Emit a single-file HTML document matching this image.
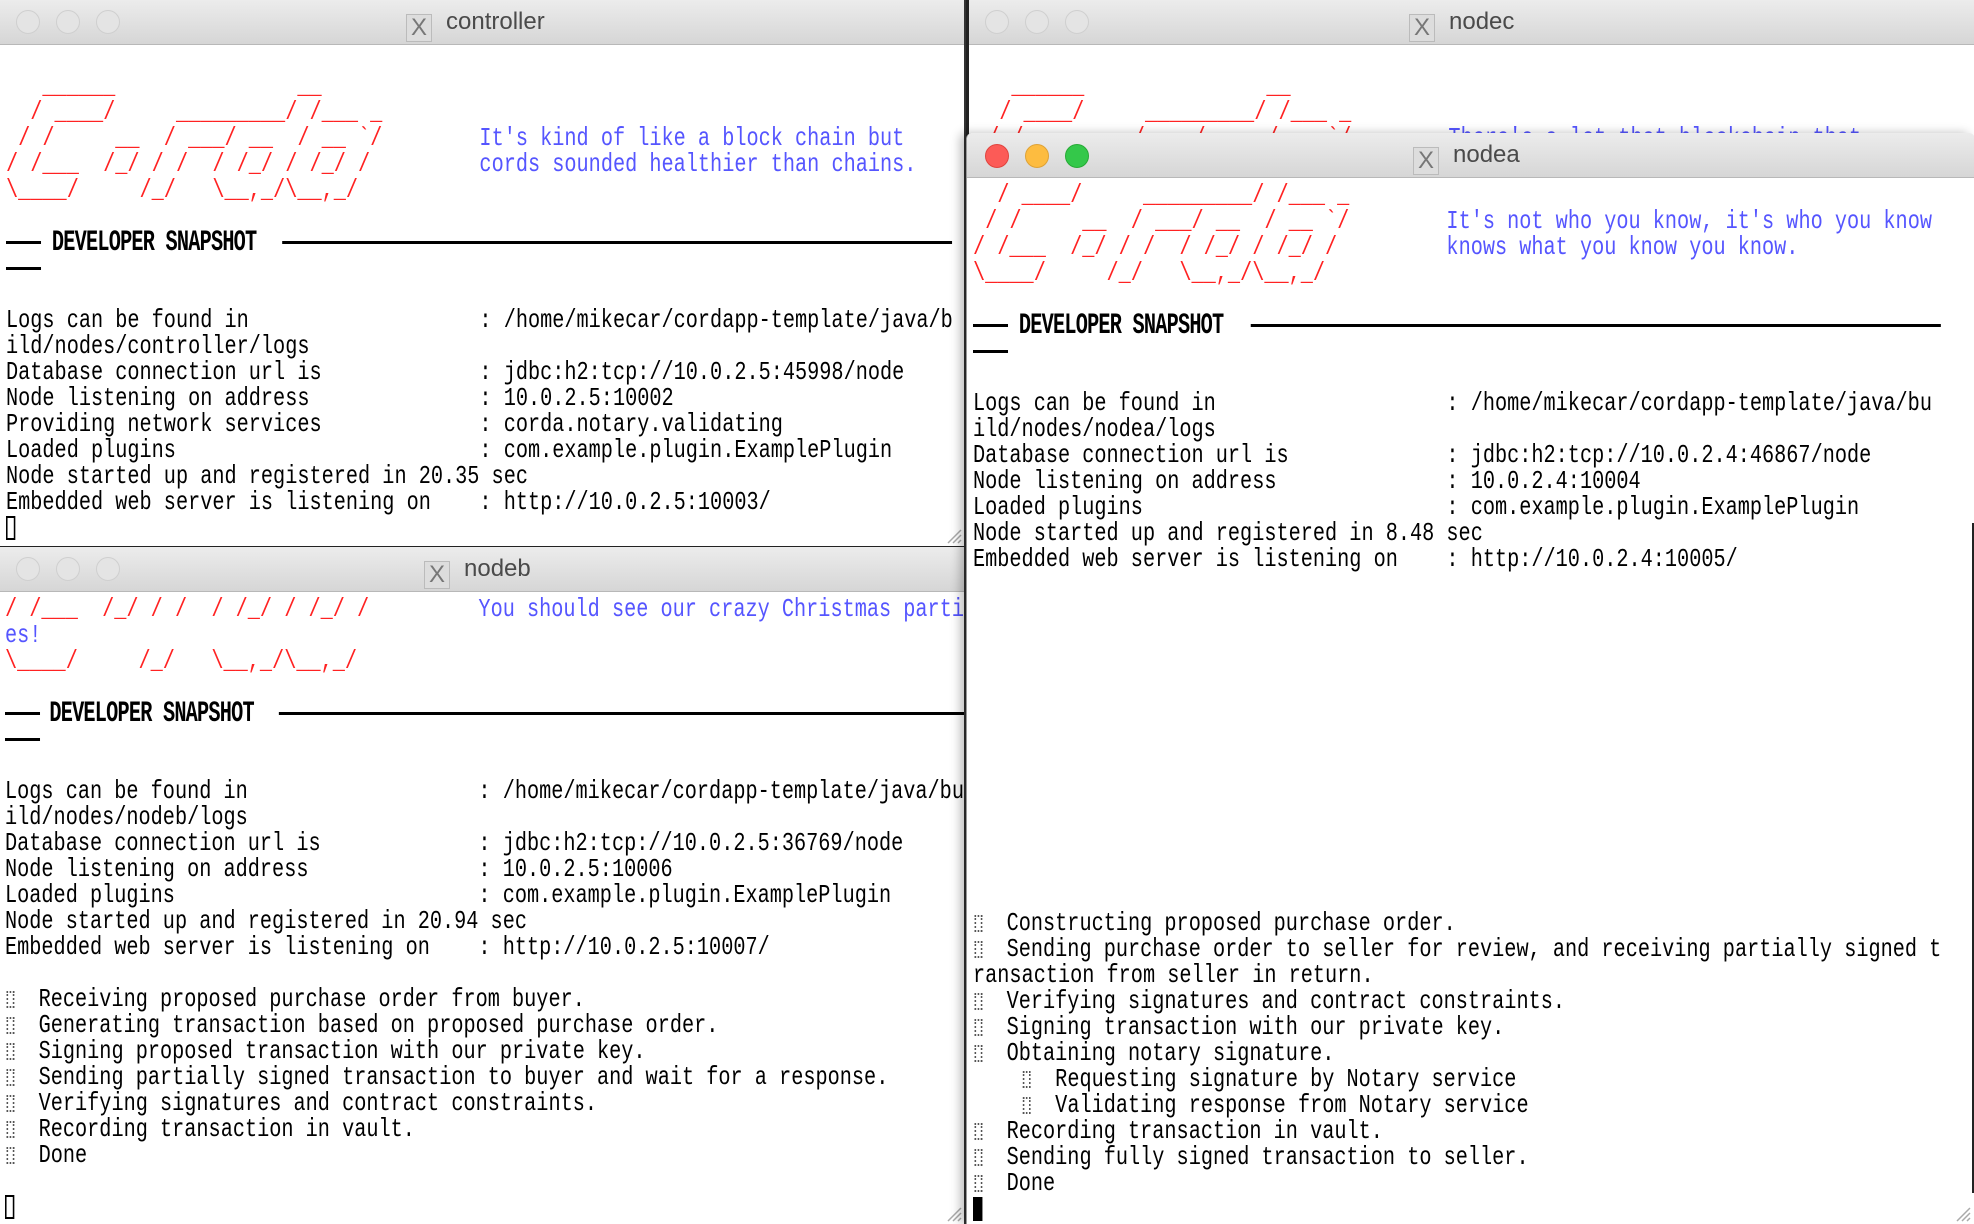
<!DOCTYPE html>
<html><head><meta charset="utf-8"><style>
body{margin:0;width:1974px;height:1224px;overflow:hidden;background:#fff;position:relative}
.win{position:absolute;background:#fff;overflow:hidden}
.tb{position:absolute;left:0;right:0;top:0;height:44px;background:linear-gradient(#ececec,#d6d6d6);border-bottom:1px solid #b8b8b8}
.tb .l{position:absolute;top:10px;width:22px;height:22px;border-radius:50%;background:#e4e4e4;border:1px solid #cfcfcf}
.ttl{position:absolute;top:0;height:44px;font:24px "Liberation Sans",sans-serif;line-height:44px;color:#4a4a4a;white-space:nowrap}
.xi{display:inline-block;width:24px;height:26px;border:1px solid #bbb;background:#ddd;color:#777;font:24px "Liberation Sans",sans-serif;line-height:26px;text-align:center;vertical-align:-6px;margin-right:14px}
.body{position:absolute;left:0;right:0;overflow:hidden;background:#fff}
.t{position:absolute;white-space:pre;font:26px/26px "Liberation Mono",monospace;color:#000;transform:scaleX(0.778);transform-origin:0 0}
.r{color:#f22}.b{color:#55f}
.g{display:inline-block;width:10px;height:17px;border:2px dotted #555;box-sizing:border-box;vertical-align:-2px;margin-left:2px}
.dv{display:inline-block;position:relative;height:26px;vertical-align:top}
.hl{position:absolute;height:3px;background:#000;top:12px}
.dt{position:absolute;top:0;font-weight:bold;transform:scaleY(1.15);letter-spacing:-1px}
.cur{display:inline-block;width:12px;height:24px;border:2px solid #000;box-sizing:border-box;vertical-align:-5px}
.grip{position:absolute;width:20px;height:20px}
</style></head><body>

<!-- controller -->
<div class="win" style="left:0;top:0;width:964px;height:546px;border-bottom:2px solid #222;border-right:2px solid #333">
 <div class="tb"><div class="l" style="left:16px"></div><div class="l" style="left:56px"></div><div class="l" style="left:96px"></div>
 <div class="ttl" style="left:406px"><span class="xi">X</span>controller</div></div>
 <div class="body" style="top:45px;bottom:0">
<div class="t" style="left:6px;top:2px">
<span class="r">   ______               __</span>
<span class="r">  / ____/     _________/ /___ _</span>
<span class="r"> / /     __  / ___/ __  / __ `/</span>        <span class="b">It's kind of like a block chain but</span>
<span class="r">/ /___  /_/ / /  / /_/ / /_/ /</span>         <span class="b">cords sounded healthier than chains.</span>
<span class="r">\____/     /_/   \__,_/\__,_/</span>

<span class="dv"><span class="hl" style="left:0;width:45px"></span><span class="dt" style="left:59px">DEVELOPER SNAPSHOT</span><span class="hl" style="left:355px;width:861px"></span></span>
<span class="dv"><span class="hl" style="left:0;width:45px"></span></span>

Logs can be found in                   : /home/mikecar/cordapp-template/java/b
ild/nodes/controller/logs
Database connection url is             : jdbc:h2:tcp://10.0.2.5:45998/node
Node listening on address              : 10.0.2.5:10002
Providing network services             : corda.notary.validating
Loaded plugins                         : com.example.plugin.ExamplePlugin
Node started up and registered in 20.35 sec
Embedded web server is listening on    : http://10.0.2.5:10003/
<span class="cur"></span></div>
 </div>
 <svg class="grip" style="right:2px;bottom:2px" viewBox="0 0 20 20"><path d="M6 19L19 6M11 19L19 11M16 19L19 16" stroke="#aaa" stroke-width="1.5"/></svg>
</div>

<!-- nodec -->
<div class="win" style="left:966px;top:0;width:1008px;height:140px;border-left:3px solid #222">
 <div class="tb"><div class="l" style="left:16px"></div><div class="l" style="left:56px"></div><div class="l" style="left:96px"></div>
 <div class="ttl" style="left:440px"><span class="xi">X</span>nodec</div></div>
 <div class="body" style="top:45px;bottom:0">
<div class="t" style="left:6px;top:2px">
<span class="r">   ______               __</span>
<span class="r">  / ____/     _________/ /___ _</span>
<span class="r"> / /     __  / ___/ __  / __ `/</span>        <span class="b">There's a lot that blockchain that</span>
</div></div>
</div>

<!-- nodeb -->
<div class="win" style="left:0;top:547px;width:964px;height:677px;border-right:2px solid #333">
 <div class="tb"><div class="l" style="left:16px"></div><div class="l" style="left:56px"></div><div class="l" style="left:96px"></div>
 <div class="ttl" style="left:424px"><span class="xi">X</span>nodeb</div></div>
 <div class="body" style="top:45px;bottom:0">
<div class="t" style="left:5px;top:-22px">
<span class="r">/ /___  /_/ / /  / /_/ / /_/ /</span>         <span class="b">You should see our crazy Christmas parti</span>
<span class="b">es!</span>
<span class="r">\____/     /_/   \__,_/\__,_/</span>

<span class="dv"><span class="hl" style="left:0;width:45px"></span><span class="dt" style="left:57px">DEVELOPER SNAPSHOT</span><span class="hl" style="left:352px;width:890px"></span></span>
<span class="dv"><span class="hl" style="left:0;width:45px"></span></span>

Logs can be found in                   : /home/mikecar/cordapp-template/java/bu
ild/nodes/nodeb/logs
Database connection url is             : jdbc:h2:tcp://10.0.2.5:36769/node
Node listening on address              : 10.0.2.5:10006
Loaded plugins                         : com.example.plugin.ExamplePlugin
Node started up and registered in 20.94 sec
Embedded web server is listening on    : http://10.0.2.5:10007/

<span class="g"></span>  Receiving proposed purchase order from buyer.
<span class="g"></span>  Generating transaction based on proposed purchase order.
<span class="g"></span>  Signing proposed transaction with our private key.
<span class="g"></span>  Sending partially signed transaction to buyer and wait for a response.
<span class="g"></span>  Verifying signatures and contract constraints.
<span class="g"></span>  Recording transaction in vault.
<span class="g"></span>  Done

<span class="cur"></span></div>
 </div>
 <svg class="grip" style="right:2px;bottom:2px" viewBox="0 0 20 20"><path d="M6 19L19 6M11 19L19 11M16 19L19 16" stroke="#aaa" stroke-width="1.5"/></svg>
</div>

<!-- nodea -->
<div class="win" style="left:966px;top:133px;width:1008px;height:1091px;border-top-left-radius:6px;border-top-right-radius:6px;box-shadow:-6px 0 10px rgba(0,0,0,0.25);border-left:1px solid #999">
 <div class="tb"><div class="l" style="left:18px;top:11px;background:#fc5b57;border-color:#e0443e"></div><div class="l" style="left:58px;top:11px;background:#fdbc40;border-color:#dea236"></div><div class="l" style="left:98px;top:11px;background:#34c84a;border-color:#27aa35"></div>
 <div class="ttl" style="left:446px"><span class="xi">X</span>nodea</div></div>
 <div class="body" style="top:45px;bottom:0">
<div class="t" style="left:6px;top:-22px">
<span class="r">  / ____/     _________/ /___ _</span>
<span class="r"> / /     __  / ___/ __  / __ `/</span>        <span class="b">It's not who you know, it's who you know</span>
<span class="r">/ /___  /_/ / /  / /_/ / /_/ /</span>         <span class="b">knows what you know you know.</span>
<span class="r">\____/     /_/   \__,_/\__,_/</span>

<span class="dv"><span class="hl" style="left:0;width:45px"></span><span class="dt" style="left:59px">DEVELOPER SNAPSHOT</span><span class="hl" style="left:357px;width:887px"></span></span>
<span class="dv"><span class="hl" style="left:0;width:45px"></span></span>

Logs can be found in                   : /home/mikecar/cordapp-template/java/bu
ild/nodes/nodea/logs
Database connection url is             : jdbc:h2:tcp://10.0.2.4:46867/node
Node listening on address              : 10.0.2.4:10004
Loaded plugins                         : com.example.plugin.ExamplePlugin
Node started up and registered in 8.48 sec
Embedded web server is listening on    : http://10.0.2.4:10005/













<span class="g"></span>  Constructing proposed purchase order.
<span class="g"></span>  Sending purchase order to seller for review, and receiving partially signed t
ransaction from seller in return.
<span class="g"></span>  Verifying signatures and contract constraints.
<span class="g"></span>  Signing transaction with our private key.
<span class="g"></span>  Obtaining notary signature.
    <span class="g"></span>  Requesting signature by Notary service
    <span class="g"></span>  Validating response from Notary service
<span class="g"></span>  Recording transaction in vault.
<span class="g"></span>  Sending fully signed transaction to seller.
<span class="g"></span>  Done
<span class="cur" style="background:#000"></span></div>
 </div>
 <div style="position:absolute;right:1px;top:390px;width:2px;height:670px;background:#222"></div>
 <svg class="grip" style="right:4px;bottom:2px" viewBox="0 0 20 20"><path d="M6 19L19 6M11 19L19 11M16 19L19 16" stroke="#aaa" stroke-width="1.5"/></svg>
</div>
</body></html>
